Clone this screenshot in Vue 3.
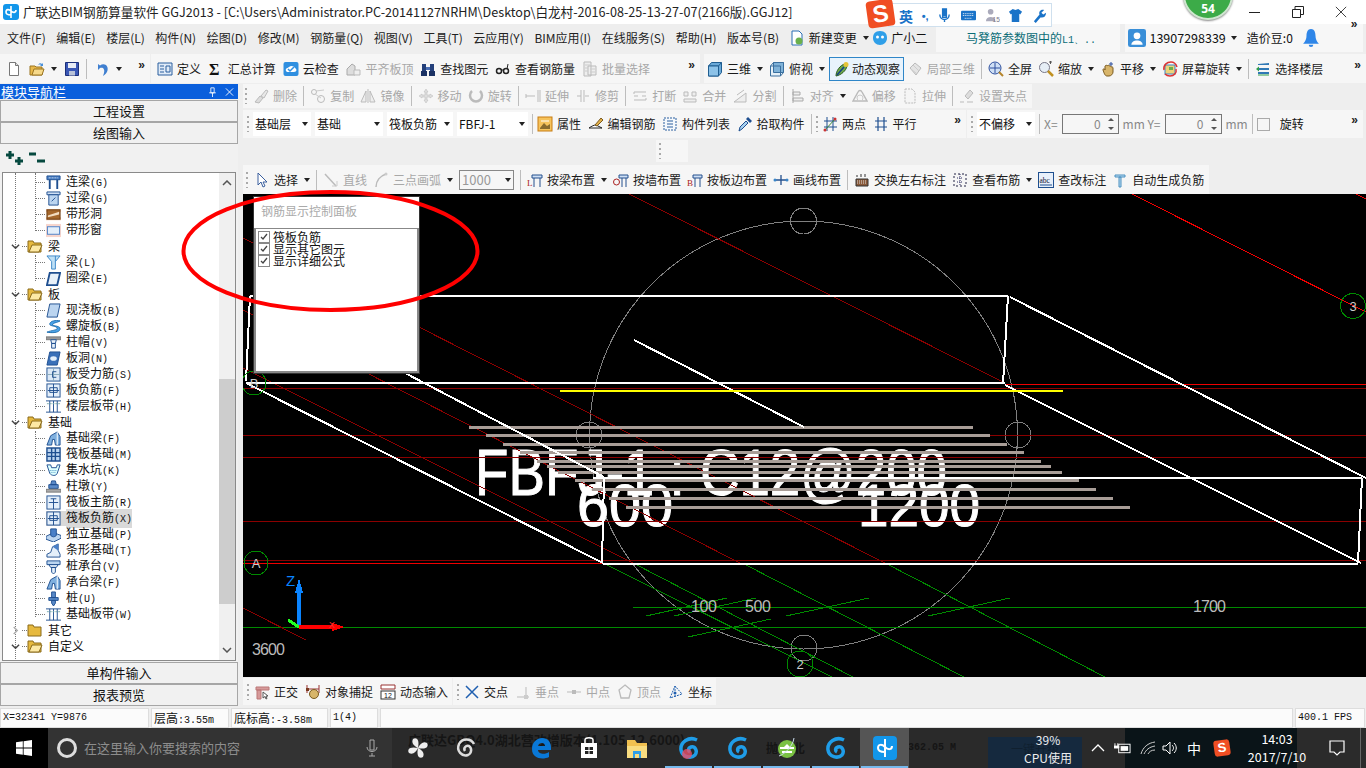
<script setup>
const icons = {
  doc: '<path d="M3.5 1.5h6l3 3v10h-9z" fill="#fff" stroke="#777"/><path d="M9.5 1.5v3h3" fill="#ddd" stroke="#777"/>',
  open: '<path d="M1 5h5l1 1h6v8H1z" fill="#e8b84a" stroke="#9a7420"/><path d="M3 14l2-6h10l-2 6z" fill="#f6d98a" stroke="#9a7420"/><path d="M9 4c1-2 3-2 4-1l1-1v3h-3l1-1c-1-.6-2-.4-3 0z" fill="#4a90d9"/>',
  save: '<path d="M1.5 1.5h13v13h-13z" fill="#3a57b5" stroke="#1c2f7a"/><path d="M4 2h8v5H4z" fill="#e8ecf5"/><path d="M5 10h6v4.500H5z" fill="#b9c2d8"/>',
  undo: '<path d="M4 3v6l2-2c3-1 5 1 4 5l-1 3c5-3 6-8 3-11-2-1-4-1-6 .5L4 3z" fill="#3f7fd0"/>',
  def: '<path d="M1 2h14v12H1z" fill="#dfeaf7" stroke="#2a5f9e"/><path d="M3 5h4M3 8h4M3 11h4M9 5h4v6H9z" stroke="#2a5f9e" fill="none"/>',
  sigma: '<text x="1" y="14" font-size="16" font-weight="700" font-family="Liberation Serif" fill="#111">Σ</text>',
  cloud: '<rect x=".5" y="1" width="15" height="14" rx="2" fill="#2f8fe0"/><path d="M3 10c-1-3 2-3 3-4 2-2 5-1 6 1 2 1 2 4-1 4H4z" fill="#fff"/><path d="M5 8l2 2 4-4" stroke="#2f8fe0" fill="none" stroke-width="1.500"/>',
  align: '<path d="M2 14V8l5-5 3 2v9z" fill="#ddd" stroke="#aaa"/><path d="M9 14h6V9H9z" fill="#eee" stroke="#bbb"/>',
  find: '<rect x="2" y="3" width="4" height="9" fill="#233f7a"/><rect x="10" y="3" width="4" height="9" fill="#233f7a"/><rect x="6" y="6" width="4" height="3" fill="#4a6fb5"/><rect x="1" y="10" width="6" height="5" fill="#1b3264"/><rect x="9" y="10" width="6" height="5" fill="#1b3264"/>',
  glasses: '<circle cx="4" cy="10" r="2.500" fill="none" stroke="#222" stroke-width="1.500"/><circle cx="11" cy="10" r="2.500" fill="none" stroke="#222" stroke-width="1.500"/><path d="M6 9h3M12 8l1-5" stroke="#222"/>',
  batch: '<path d="M2 1h7v14H2zM6 5h8v9H6z" fill="#eee" stroke="#bbb"/><path d="M3 4h5M3 7h3M3 10h3M8 8h5M8 11h5" stroke="#ccc"/>',
  cube: '<path d="M1.500 5l3-3.500h10v10l-3 3.500h-10z" fill="#6aa9d8" stroke="#1f5d90"/><path d="M1.500 5h10v10M11.500 5l3-3.500" fill="none" stroke="#1f5d90"/><path d="M1.500 5h10v10h-10z" fill="#8cc2e8" stroke="#1f5d90"/>',
  top: '<path d="M1.500 5l3-3.500h10v10l-3 3.500h-10z" fill="#e5f0f8" stroke="#3a6f9e"/><path d="M4.500 1.500h10v10h-10z" fill="#7fb2d8" stroke="#3a6f9e"/><path d="M1.500 5h10v10" fill="none" stroke="#3a6f9e"/>',
  orbit: '<path d="M2 15c0-5 4-11 9-12l2 2c-1 5-6 9-11 10z" fill="#6fa84a" stroke="#2a5c22"/><circle cx="12" cy="3.500" r="2.500" fill="#e5c43a"/><path d="M3 14l7-8" stroke="#123f8a" stroke-width="1.500"/>',
  local3d: '<path d="M3 7l5-5 6 5-5 7z" fill="#e4e4e4" stroke="#bbb"/><path d="M6 4l6 6M4 8l6 5" stroke="#ccc"/>',
  full: '<circle cx="7" cy="7" r="6" fill="#cfe0f5" stroke="#2d4f9e"/><path d="M7 2v10M2 7h10" stroke="#2d4f9e"/><path d="M11 11l4 4" stroke="#b5842a" stroke-width="2"/>',
  zoom: '<circle cx="6.500" cy="6.500" r="5" fill="#e6eef6" stroke="#778"/><path d="M10 10l5 5" stroke="#c09020" stroke-width="2.500"/><path d="M11 1h3M12.500 0v3" stroke="#555"/>',
  pan: '<path d="M3 9c0-2 2-1 2 0V5c1-1 2-1 2 0 1-1 2-1 2 0 1-.5 2 0 2 1 1-.5 2 0 2 1v4c0 2-2 4-4 4H7c-2 0-3-3-4-6z" fill="#d8b56a" stroke="#7a5a20"/><path d="M11 1v4M9 3h4" stroke="#2d4f9e"/>',
  rot: '<rect x="3" y="4" width="10" height="9" fill="#eed27a" stroke="#3a86c8"/><path d="M2 9c-1-5 3-8 7-8 3 0 5 2 6 5M14 8c1 4-2 7-6 7-2 0-4-1-5-2" fill="none" stroke="#d33" stroke-width="1.500"/><rect x="7" y="6" width="4" height="3" fill="#6ab04c"/>',
  floors: '<path d="M3 3l11-1v2H3zM3 7h11v2H3zM3 11h11v2H3z" fill="#2f78b5"/><path d="M1 8l3-2.500v5z" fill="#2f9e4a"/><path d="M3 14h11" stroke="#2f9e4a"/>',
  del: '<path d="M2 14l5-6 3 2-4 5z" fill="#ddd" stroke="#bbb"/><path d="M8 8l5-6 2 1-4 7z" fill="#e8e8e8" stroke="#bbb"/>',
  copy: '<circle cx="4" cy="4" r="2.500" fill="none" stroke="#bbb"/><circle cx="11" cy="11" r="3.500" fill="none" stroke="#bbb"/><path d="M6 3l8-1M5 6l6 4" stroke="#ccc"/>',
  mirror: '<path d="M6 3v11H1zM10 3v11h5zM8 1v14" fill="#eee" stroke="#bbb"/>',
  move: '<path d="M8 1l2 3H9v3h3V6l3 2-3 2V9H9v3h1l-2 3-2-3h1V9H4v1L1 8l3-2v1h3V4H6z" fill="#ddd" stroke="#bbb" stroke-width=".500"/>',
  rotate: '<path d="M4 3a6 6 0 1 0 8 0" fill="none" stroke="#bbb" stroke-width="2.500"/>',
  extend: '<path d="M1 8h9M1 6v4M13 2v12M15 2v12" stroke="#bbb" fill="none"/>',
  trim: '<path d="M2 8h4M10 8h4M6 2v12M9 2v12" stroke="#bbb" fill="none"/>',
  brk: '<path d="M2 4h12M2 12h12M2 8h4M10 8h4M2 4v2M14 10v2" stroke="#bbb" fill="none"/>',
  merge: '<path d="M2 4h4v4H2zM10 4h4v4h-4zM2 11h12v3H2z" fill="#eee" stroke="#bbb"/>',
  split: '<path d="M2 14L14 5v9z" fill="#eee" stroke="#bbb"/><path d="M5 7l7-5" stroke="#bbb"/>',
  alignl: '<path d="M3 1v14M3 4h7v3H3zM3 10h10v3H3z" fill="#eee" stroke="#aaa"/>',
  offset: '<path d="M1 13l5-9c1-2 3-2 4 0l5 9z" fill="none" stroke="#bbb" stroke-width="1.500"/><circle cx="8" cy="10" r="3" fill="none" stroke="#ccc"/>',
  stretch: '<path d="M3 1h7l3 3v11H3z" fill="#f5f5f5" stroke="#bbb" stroke-dasharray="2 1"/>',
  grip: '<path d="M1 14h4M8 14h6M11 2l3 3-5 6-3-3z" fill="#ddd" stroke="#bbb"/>',
  prop: '<rect x="1" y="1" width="14" height="14" fill="#f6c35c" stroke="#c77d12"/><path d="M3 12l4-5 3 3 3-2v5H3z" fill="#8a6b2d"/><path d="M4 5h8" stroke="#fff"/>',
  edit: '<path d="M1 12c3-2 5-3 7-3l6 3H1z" fill="#fff" stroke="#222"/><path d="M7 9l6-7 2 2-6 6z" fill="#e2b04a" stroke="#7a5a20"/>',
  list: '<path d="M2 2h12v12H2z" fill="#f4f8fc" stroke="#2a5f9e" stroke-dasharray="2 1"/><path d="M5 5h6M5 8h6M5 11h6" stroke="#2a5f9e"/>',
  pick: '<path d="M2 15l1-4 6-6 2 2-6 6z" fill="#a6d0f0" stroke="#1f4f90"/><path d="M9 3l2-2 4 4-2 2z" fill="#1f4f90"/>',
  two: '<path d="M2 5h13M2 11h13M5 1v14M11 1v14" stroke="#1e4f8f" fill="none"/><path d="M2 15l12-13" stroke="#3a8a3a"/><circle cx="3" cy="14" r="1.500" fill="#c33"/><circle cx="13" cy="3" r="1.500" fill="#c33"/>',
  par: '<path d="M2 5h12M2 11h12M5 1v14M11 1v14" stroke="#1e4f8f" fill="none" stroke-width="1.200"/>',
  sel: '<path d="M4 1v12l3-3 2 5 2-1-2-4h4z" fill="#fff" stroke="#3a5f9e"/>',
  line: '<path d="M2 2l11 12" stroke="#bbb" stroke-width="1.500"/><path d="M9 14h5V9" fill="none" stroke="#ccc"/>',
  arc: '<path d="M3 15C3 9 7 4 13 2" fill="none" stroke="#bbb" stroke-width="1.500"/><circle cx="13" cy="2" r="1.500" fill="#ccc"/>',
  beam: '<path d="M5 3h10v3H5zM7 6v9M13 6v9" fill="#cfe0f5" stroke="#24508e"/><text x="0" y="14" font-size="9" font-family="Liberation Serif" fill="#a22">L</text>',
  wall: '<path d="M6 3h9v3H6zM9 6v9M13 6v9" fill="#cfe0f5" stroke="#24508e"/><circle cx="3.500" cy="10" r="3" fill="none" stroke="#a22"/>',
  edge: '<path d="M6 3h9v3H6zM8 6v9M13 6v9" fill="#cfe0f5" stroke="#24508e"/><text x="0" y="14" font-size="9" font-family="Liberation Serif" fill="#a22">B</text>',
  dline: '<path d="M1 8h14M8 3v10" stroke="#24508e" stroke-width="1.300"/><circle cx="2" cy="8" r="1.500" fill="#3a86c8"/><circle cx="14" cy="8" r="1.500" fill="#3a86c8"/>',
  swap: '<path d="M2 7h12v7H2z" fill="#8a5a3a" stroke="#333"/><path d="M3 9h10M3 11h10" stroke="#ddd" stroke-dasharray="1 1"/><path d="M3 5V3M7 5V2M11 5V2" stroke="#333"/>',
  view: '<path d="M2 2h12v12H2z" fill="none" stroke="#224" stroke-dasharray="2 2"/><path d="M8 2v12M5 6h6M5 10h6" stroke="#336" stroke-dasharray="1 1"/>',
  abc: '<rect x=".5" y=".5" width="15" height="15" fill="#e7effa" stroke="#1e4f8f"/><text x="1.500" y="11" font-size="7.500" font-family="Liberation Serif" fill="#113">abc</text><path d="M2 13h12" stroke="#1e4f8f"/>',
  auto: '<path d="M3 3h10v2H3zM7 5h2v10H7z" fill="#bcdcf2" stroke="#4a90c0"/>',
  ortho: '<path d="M2 3h13v3H2zM3 6v9h4V6z" fill="#d69a9a" stroke="#b77"/><path d="M9 8v6l2-1.500 1 2.500 1-.500-1-2.500h2z" fill="#fff" stroke="#555"/>',
  snap: '<path d="M2 1v8M14 1v8" stroke="#933"/><path d="M2 5h12" stroke="#933"/><circle cx="9" cy="10" r="4.500" fill="#d8b56a" stroke="#7a5a20"/><rect x="1" y="4" width="3" height="3" fill="#7a3a20"/>',
  dyn: '<path d="M1 1h14v4H1z" fill="#fff" stroke="#933"/><rect x="1" y="7" width="14" height="8" fill="#fff" stroke="#333"/><text x="4" y="14" font-size="7" font-family="Liberation Sans" fill="#111">12</text>',
  cross: '<path d="M2 2l12 12M14 2L2 14" stroke="#1f5fb0" stroke-width="1.500"/>',
  perp: '<path d="M2 13h12M11 3v10" stroke="#bbb"/><rect x="9" y="11" width="4" height="4" fill="#ccc"/>',
  mid: '<path d="M1 8h14" stroke="#bbb"/><rect x="6" y="6" width="4" height="4" fill="#bbb"/>',
  apex: '<path d="M8 1l6 5-2 8H4L2 6z" fill="none" stroke="#bbb" stroke-width="1.300"/>',
  coord: '<path d="M2 14l5-12 7 8zM7 2v12" fill="none" stroke="#1f5fb0" stroke-dasharray="2 1"/><circle cx="7" cy="9" r="1.500" fill="#1f5fb0"/>',
  lianl: '<path d="M1 1h14v4H1z" fill="#4a80c8" stroke="#1f4f90"/><path d="M4 5v10M12 5v10" stroke="#1f4f90" stroke-width="2"/><path d="M3 3h10" stroke="#bcd" stroke-dasharray="2 1"/>',
  guol: '<path d="M1 1h14v3H1z" fill="#cfe0f5" stroke="#1f4f90"/><path d="M3 4h10v11H3z" fill="#bcd5f0" stroke="#1f4f90"/><path d="M6 11l4-4" stroke="#1f4f90"/>',
  ddong: '<path d="M0 2h16v3H0zM0 11h16v3H0z" fill="#f2c9b0"/><rect x="1" y="3" width="14" height="10" fill="#a5672c" stroke="#6a3a10"/><path d="M2 9l12-4v3L2 11z" fill="#f2dcc0"/>',
  dchuang: '<path d="M0 1h16v14H0z" fill="#f7d5cc"/><rect x="1.500" y="4" width="13" height="8" fill="#e4effa" stroke="#4a80c8"/>',
  liang: '<path d="M1 1h14l-5 6v8H6V7z" fill="#bfe0f5" stroke="#3a86c8"/><path d="M10 1v6" stroke="#3a86c8"/>',
  quan: '<path d="M4 2h11l-3 13H1z" fill="#e8f1fa" stroke="#1f4f90" stroke-width="2"/>',
  xian: '<path d="M4 1h11l-3 14H1z" fill="#bcd5f0" stroke="#1f4f90"/>',
  luo: '<path d="M15 2c-5-1-10 0-11 3-1 3 8 2 8 5 0 2-6 2-11 4 5 1 13 1 14-3 1-4-7-3-8-5 0-2 5-2 8-4z" fill="#4aa3e8" stroke="#1f6fb0"/>',
  zhum: '<path d="M0 2h16v3H0z" fill="#999" stroke="#777"/><path d="M5 5h6l-1 4H6zM6 9h4v5H6z" fill="#e8f1fa" stroke="#1f4f90"/>',
  bdong: '<path d="M4 1h11l-3 14H1z" fill="#3a70b8" stroke="#1f4f90"/><ellipse cx="8" cy="8" rx="3.500" ry="2.500" fill="#e4effa"/>',
  shoul: '<rect x="1" y="1" width="14" height="14" fill="#dce9f7" stroke="#1f4f90"/><path d="M8 1v14M1 8h14" stroke="#8ab"/><path d="M11 5H7v6h4" fill="none" stroke="#1f4f90"/>',
  fuj: '<rect x="1" y="1" width="14" height="14" fill="#e4effa" stroke="#1f4f90"/><path d="M8 1v14M4 5h8v5H4zM2 8h12" fill="none" stroke="#1f4f90"/>',
  loub: '<path d="M0 2h16M0 14h16M4 2v12M12 2v12M8 2v12" stroke="#1f4f90" fill="none"/><path d="M1 5h14" stroke="#7aa" stroke-dasharray="2 1"/>',
  jcl: '<path d="M1 15l4-10L12 1l3 5v9h-5l-1-6H7l-1 6z" fill="#7fb0df" stroke="#1f4f90"/><path d="M12 1v14" stroke="#fff"/>',
  fb: '<path d="M1 1h14v14H1z" fill="#bcd5f0" stroke="#1f4f90" stroke-width="1.500"/><path d="M6 1v14M10 1v14M1 6h14M1 10h14" stroke="#1f4f90" stroke-width="1.500"/>',
  jis: '<path d="M1 2l4 0 1 3h5l1-3h3l-3 9c-1 3-6 3-8 0z" fill="#dff" stroke="#1f4f90"/><path d="M4 8h8M5 10h6" stroke="#4a90c0" stroke-dasharray="1 1"/>',
  dun: '<path d="M5 6l1-4h4l1 4zM3 6h10v4H3z" fill="#5a8ac8" stroke="#1f4f90"/><path d="M0 11h16v3H0z" fill="#aaa" stroke="#777"/>',
  zj: '<rect x="1" y="1" width="14" height="14" fill="#e4effa" stroke="#1f4f90"/><path d="M8 4v11M3 8h10M5 4h6" stroke="#1f4f90"/>',
  duli: '<path d="M0 10l8-4 8 3v3l-8 4-8-3z" fill="#bcd5f0" stroke="#1f4f90"/><path d="M5 2h6v7c-2 2-4 2-6 0z" fill="#4a80c8" stroke="#1f4f90"/>',
  tiao: '<path d="M1 15v-3l4-2 2-6 6-3v7l2 4v3z" fill="#e4effa" stroke="#1f4f90"/><path d="M7 4l6-3v7" fill="#4a80c8"/>',
  cheng: '<path d="M1 2h14v4H1z" fill="#bcd5f0" stroke="#1f4f90"/><path d="M3 6h10l-2 3H5zM6 9h4v5l-2 2-2-2z" fill="#e4effa" stroke="#1f4f90"/>',
  zhuang: '<path d="M6 1h4v6H6zM3 7h10v3H3zM6 10h4v3l-2 3-2-3z" fill="#5a8ac8" stroke="#1f4f90"/>'
}

const menus = ['文件(F)', '编辑(E)', '楼层(L)', '构件(N)', '绘图(D)', '修改(M)', '钢筋量(Q)', '视图(V)', '工具(T)', '云应用(Y)', 'BIM应用(I)', '在线服务(S)', '帮助(H)', '版本号(B)']

const row2 = [
  { w: 150, items: [
    { i: 'doc' }, { i: 'open', a: 1 }, { i: 'save' }, { k: 'sep' }, { i: 'undo', a: 1 }, { k: 'more' }
  ] },
  { w: 549, items: [
    { i: 'def', t: '定义' }, { i: 'sigma', t: '汇总计算' }, { i: 'cloud', t: '云检查' }, { i: 'align', t: '平齐板顶', off: 1 },
    { i: 'find', t: '查找图元' }, { i: 'glasses', t: '查看钢筋量' }, { i: 'batch', t: '批量选择', off: 1 }, { k: 'more' }
  ] },
  { w: 662, items: [
    { i: 'cube', t: '三维', a: 1 }, { i: 'top', t: '俯视', a: 1 }, { i: 'orbit', t: '动态观察', on: 1 }, { i: 'local3d', t: '局部三维', off: 1 }, { k: 'sep' },
    { i: 'full', t: '全屏' }, { i: 'zoom', t: '缩放', a: 1 }, { i: 'pan', t: '平移', a: 1 }, { i: 'rot', t: '屏幕旋转', a: 1 }, { k: 'sep' },
    { i: 'floors', t: '选择楼层' }, { k: 'more' }
  ] }
]

const rows = [
  { cls: 'r3', groups: [{ w: 789, items: [
    { k: 'grip' }, { i: 'del', t: '删除', off: 1 }, { k: 'sep' }, { i: 'copy', t: '复制', off: 1 }, { i: 'mirror', t: '镜像', off: 1 }, { k: 'sep' },
    { i: 'move', t: '移动', off: 1 }, { i: 'rotate', t: '旋转', off: 1 }, { k: 'sep' }, { i: 'extend', t: '延伸', off: 1 }, { i: 'trim', t: '修剪', off: 1 }, { k: 'sep' },
    { i: 'brk', t: '打断', off: 1 }, { i: 'merge', t: '合并', off: 1 }, { i: 'split', t: '分割', off: 1 }, { k: 'sep' },
    { i: 'alignl', t: '对齐', off: 1, a: 1 }, { i: 'offset', t: '偏移', off: 1 }, { i: 'stretch', t: '拉伸', off: 1 }, { k: 'sep' }, { i: 'grip', t: '设置夹点', off: 1 }
  ] }] },
  { cls: 'r4', groups: [
    { w: 723, items: [
      { k: 'grip' }, { k: 'sel', t: '基础层', w: 58 }, { k: 'sel', t: '基础', w: 68 }, { k: 'sel', t: '筏板负筋', w: 66 }, { k: 'sel', t: 'FBFJ-1', w: 71 }, { k: 'sep' },
      { i: 'prop', t: '属性' }, { i: 'edit', t: '编辑钢筋' }, { i: 'list', t: '构件列表' }, { i: 'pick', t: '拾取构件' }, { k: 'sep' }, { k: 'grip' },
      { i: 'two', t: '两点' }, { i: 'par', t: '平行' }, { k: 'more' }
    ] },
    { w: 396, items: [
      { k: 'grip' }, { k: 'sel', t: '不偏移', w: 58 }, { k: 'sep' }, { k: 'lbl', t: 'X=' }, { k: 'spin' }, { k: 'lbl', t: 'mm Y=' }, { k: 'spin' }, { k: 'lbl', t: 'mm' }, { k: 'sep' },
      { k: 'chk' }, { k: 'txt', t: '旋转' }, { k: 'more' }
    ] }
  ] },
  { cls: 'r5', groups: [{ w: 32, items: [{ k: 'grip' }] }] },
  { cls: 'r6', groups: [{ w: 966, items: [
    { k: 'grip' }, { i: 'sel', t: '选择', a: 1 }, { k: 'sep' }, { i: 'line', t: '直线', off: 1 }, { i: 'arc', t: '三点画弧', off: 1, a: 1 }, { k: 'num' }, { k: 'sep' },
    { i: 'beam', t: '按梁布置', a: 1 }, { i: 'wall', t: '按墙布置' }, { i: 'edge', t: '按板边布置' }, { i: 'dline', t: '画线布置' }, { k: 'sep' },
    { i: 'swap', t: '交换左右标注' }, { i: 'view', t: '查看布筋', a: 1 }, { i: 'abc', t: '查改标注' }, { i: 'auto', t: '自动生成负筋' }
  ] }] }
]

const snap = [
  { w: 209, items: [{ k: 'grip' }, { i: 'ortho', t: '正交' }, { i: 'snap', t: '对象捕捉' }, { i: 'dyn', t: '动态输入' }] },
  { w: 263, items: [{ k: 'grip' }, { i: 'cross', t: '交点' }, { i: 'perp', t: '垂点', off: 1 }, { i: 'mid', t: '中点', off: 1 }, { i: 'apex', t: '顶点', off: 1 }, { i: 'coord', t: '坐标' }] }
]

const tree = [
  { i: 'lianl', t: '连梁', c: '(G)' }, { i: 'guol', t: '过梁', c: '(G)' }, { i: 'ddong', t: '带形洞' }, { i: 'dchuang', t: '带形窗' },
  { f: 1, t: '梁' }, { i: 'liang', t: '梁', c: '(L)' }, { i: 'quan', t: '圈梁', c: '(E)' },
  { f: 1, t: '板' }, { i: 'xian', t: '现浇板', c: '(B)' }, { i: 'luo', t: '螺旋板', c: '(B)' }, { i: 'zhum', t: '柱帽', c: '(V)' }, { i: 'bdong', t: '板洞', c: '(N)' },
  { i: 'shoul', t: '板受力筋', c: '(S)' }, { i: 'fuj', t: '板负筋', c: '(F)' }, { i: 'loub', t: '楼层板带', c: '(H)' },
  { f: 1, t: '基础' }, { i: 'jcl', t: '基础梁', c: '(F)' }, { i: 'fb', t: '筏板基础', c: '(M)' }, { i: 'jis', t: '集水坑', c: '(K)' }, { i: 'dun', t: '柱墩', c: '(Y)' },
  { i: 'zj', t: '筏板主筋', c: '(R)' }, { i: 'fuj', t: '筏板负筋', c: '(X)', on: 1 }, { i: 'duli', t: '独立基础', c: '(P)' }, { i: 'tiao', t: '条形基础', c: '(T)' },
  { i: 'cheng', t: '桩承台', c: '(V)' }, { i: 'jcl', t: '承台梁', c: '(F)' }, { i: 'zhuang', t: '桩', c: '(U)' }, { i: 'loub', t: '基础板带', c: '(W)' },
  { f: 2, t: '其它' }, { f: 1, t: '自定义' }
]

const guides = [
  { left: '15px', top: '0', height: '488px' },
  { left: '35px', top: '0', height: '58px' },
  { left: '35px', top: '82px', height: '26px' },
  { left: '35px', top: '130px', height: '106px' },
  { left: '35px', top: '258px', height: '186px' }
]

const bars = [[427, 973], [435, 990], [444, 1007], [452, 1024], [461, 1041], [466, 1051], [472, 1062], [480, 1079], [489, 1096], [498, 1113], [507, 1130]]
  .map(([y, x2]) => ({ y, x2, x1: x2 - 504 }))

const whites = [
  'M250 296H1008', 'M250 296L246 381', 'M246 383H1005', 'M1008 296L1003 384', 'M1010 297L1366 478', 'M1005 385L1361 563',
  'M405 373L604 477', 'M246 383L603 563', 'M634 340L804 427', 'M593 478H1362', 'M603 564H1358', 'M1362 478L1358 563', 'M604 478L602 563'
]
const darks = [
  'M243 388H1366', 'M243 435H1366', 'M243 457H1366', 'M243 521H1366', 'M243 560H1366', 'M243 238L885 563', 'M243 310L740 563',
  'M243 368L633 563', 'M629 194L1005 383', 'M243 608L306 640'
]
const brights = ['M1005 384H1366', 'M243 563H603', 'M1132 194L1366 312', 'M1356 194L1366 199']
const greens = [
  'M243 627H1366', 'M633 607H1366', 'M603 563L832 677', 'M633 563L853 677', 'M742 563L964 677', 'M885 563L1105 677',
  'M646 616L727 598', 'M674 616L756 598', 'M688 637L771 619', 'M786 616L869 598', 'M928 616L1010 598'
]
const greys = [[803.5, 221], [589, 435], [1018, 435], [804, 648]]
const rings = [
  { x: 256, y: 563, r: 12, t: 'A' }, { x: 800, y: 664, r: 13, t: '2' }, { x: 1353, y: 306, r: 12.5, t: '3' }, { x: 254, y: 383, r: 12, t: 'B' }
]
const notes = [
  { x: 691, t: '100', y: 612, l: 26 }, { x: 745, t: '500', y: 612, l: 26 }, { x: 1193, t: '1700', y: 612, l: 33 }, { x: 252, t: '3600', y: 655, l: 33 }
]
const checks = ['筏板负筋', '显示其它图元', '显示详细公式']
const stats = [
  { t: 'X=32341 Y=9876', w: 149 }, { c: '层高', t: ':3.55m', w: 78 }, { c: '底标高', t: ':-3.58m', w: 97 }, { t: '1(4)', w: 48 }, { t: '', w: 913 }, { t: '400.1 FPS', w: 70 }
]
</script>

<template>
  <div class="screen">
    <header class="title">
      <svg class="logo" viewBox="0 0 16 16"><rect width="16" height="16" rx="3" fill="#1296ea" /><path d="M8 2v12M3 8c0-3 3-3 5-1 2 2 5 2 5-1M3 8c0 2 2 3 5 3" fill="none" stroke="#fff" stroke-width="1.600" /></svg>
      <span>广联达BIM钢筋算量软件 GGJ2013 - [C:\Users\Administrator.PC-20141127NRHM\Desktop\白龙村-2016-08-25-13-27-07(2166版).GGJ12]</span>
      <div class="sogou">
        <span class="s-logo">S</span>
        <b class="s-en">英</b>
        <span class="s-p">•,</span>
        <svg viewBox="0 0 16 16"><path d="M6 1h4v9H6zM3 7c0 7 10 7 10 0M8 12v3" fill="none" stroke="#1a73c8" stroke-width="1.500" /><path d="M6 1h4v8H6z" fill="#1a73c8" /></svg>
        <svg viewBox="0 0 16 16"><rect y="3" width="16" height="10" rx="1" fill="#1a73c8" /><path d="M2 6h12M2 8h12M4 11h8" stroke="#fff" stroke-dasharray="1 1" /></svg>
        <svg viewBox="0 0 16 16"><circle cx="6" cy="4" r="3" fill="#aab" /><path d="M1 14c0-6 10-6 10 0z" fill="#aab" /><text x="8" y="15" font-size="7" font-family="Liberation Sans" fill="#778">15</text></svg>
        <svg viewBox="0 0 16 16"><path d="M5 1L1 4l2 3 1-1v9h8V6l1 1 2-3-4-3-3 1z" fill="#1a73c8" /></svg>
        <svg viewBox="0 0 16 16"><path d="M2 14l6-7c-1-3 1-6 5-5l-3 3 2 2 3-2c0 4-3 6-6 5l-5 6z" fill="#1a73c8" /></svg>
      </div>
      <div class="badge"><span>54</span></div>
      <div class="winbtns">
        <span class="wb-min"></span>
        <svg viewBox="0 0 12 12"><path d="M.5 3.500h8v8h-8zM3 3.500V.5h8.500v8H8.500" fill="none" stroke="#222" /></svg>
        <svg viewBox="0 0 14 14"><path d="M1 1l12 12M13 1L1 13" stroke="#222" /></svg>
      </div>
    </header>

    <nav class="menu">
      <span v-for="m in menus" :key="m" class="mi">{{ m }}</span>
      <span class="m-ext">
        <svg class="ic" viewBox="0 0 16 16"><path d="M3 1h7l3 3v11H3z" fill="#fff" stroke="#2a6fb5" /><circle cx="10" cy="11" r="3.500" fill="#6ab04c" /></svg>
        新建变更<i class="ar"></i>
      </span>
      <span class="m-ext g">
        <svg class="ic" viewBox="0 0 16 16"><path d="M8 1c5 0 7 3 7 7s-3 7-7 7-7-3-7-7 2-7 7-7z" fill="#2f9fe8" /><circle cx="5.500" cy="7" r="1.500" fill="#fff" /><circle cx="10.500" cy="7" r="1.500" fill="#fff" /></svg>
        广小二
      </span>
      <span class="ticker">马凳筋参数图中的<em>L1、..</em></span>
      <span class="acct">
        <svg class="ic big" viewBox="0 0 16 16"><rect width="16" height="16" rx="2" fill="#3a8fd8" /><circle cx="8" cy="6" r="3" fill="#fff" /><path d="M3 14c0-5 10-5 10 0z" fill="#fff" /></svg>
        13907298339<i class="ar"></i><span class="bean">造价豆:0</span>
        <svg class="ic big" viewBox="0 0 16 16"><path d="M8 0c3 0 4 3 4 6s1 5 3 7H1c2-2 3-4 3-7s1-6 4-6z" fill="#2f86e8" /><path d="M6 14a2 2 0 0 0 4 0z" fill="#2f86e8" /></svg>
        <b class="more acct-more">»</b>
      </span>
    </nav>

    <div class="tools top">
      <div v-for="(g, gi) in row2" :key="gi" class="group" :style="{ width: g.w + 'px' }">
        <template v-for="(it, n) in g.items" :key="n">
          <span v-if="it.k === 'sep'" class="sep"></span>
          <b v-else-if="it.k === 'more'" class="more">»</b>
          <span v-else class="btn" :class="{ off: it.off, on: it.on }">
            <svg class="ic" viewBox="0 0 16 16" v-html="icons[it.i]"></svg>
            <span v-if="it.t">{{ it.t }}</span>
            <i v-if="it.a" class="ar"></i>
          </span>
        </template>
      </div>
    </div>

    <div class="main">
      <aside class="nav">
        <div class="nav-head"><span>模块导航栏</span><span class="pin">
          <svg viewBox="0 0 10 12"><path d="M3 1h4v6H3zM1 7h8M5 7v5" fill="none" stroke="#fff" /></svg>
          <svg viewBox="0 0 10 10"><path d="M1 1l8 8M9 1L1 9" stroke="#fff" /></svg>
        </span></div>
        <div class="nbtn">工程设置</div>
        <div class="nbtn">绘图输入</div>
        <div class="tree-wrap">
          <div class="tree-tools">
            <svg viewBox="0 0 18 16"><path d="M4 1v8M0 5h8M13 7v8M9 11h8" stroke="#06493f" stroke-width="3" /></svg>
            <svg viewBox="0 0 18 16"><path d="M1 4h7M9 11h8" stroke="#06493f" stroke-width="3" /></svg>
          </div>
          <div class="tree">
            <i v-for="(g, n) in guides" :key="n" class="guide" :style="g"></i>
            <div v-for="(r, n) in tree" :key="n" class="row" :class="{ folder: r.f, hit: r.on }">
              <template v-if="r.f">
                <svg class="chev" viewBox="0 0 10 10"><path :d="r.f === 1 ? 'M1 3l4 4 4-4' : 'M3 1l4 4-4 4'" fill="none" :stroke="r.f === 1 ? '#444' : '#aaa'" stroke-width="1.500" /></svg>
                <i class="dash short"></i>
                <svg class="fold" viewBox="0 0 16 14"><path d="M1 2h5l1 2h7v9H1z" fill="#e6b93f" stroke="#8a6a1a" /><path v-if="r.f === 1" d="M2 13l3-7h10l-3 7z" fill="#fde9a5" stroke="#8a6a1a" /></svg>
                <span class="rt">{{ r.t }}</span>
              </template>
              <template v-else>
                <i class="dash"></i>
                <svg class="ic tic" viewBox="0 0 16 16" v-html="icons[r.i]"></svg>
                <span class="rt">{{ r.t }}<span class="code">{{ r.c }}</span></span>
              </template>
            </div>
            <div class="sbar">
              <svg viewBox="0 0 10 6"><path d="M1 5l4-4 4 4" fill="none" stroke="#555" stroke-width="1.500" /></svg>
              <svg viewBox="0 0 10 6"><path d="M1 1l4 4 4-4" fill="none" stroke="#555" stroke-width="1.500" /></svg>
              <i class="thumb"></i>
            </div>
          </div>
        </div>
        <div class="nbtn">单构件输入</div>
        <div class="nbtn">报表预览</div>
      </aside>

      <section class="work">
        <div v-for="r in rows" :key="r.cls" class="tools" :class="r.cls">
          <div v-for="(g, gi) in r.groups" :key="gi" class="group" :style="{ width: g.w + 'px' }">
            <template v-for="(it, n) in g.items" :key="n">
              <span v-if="it.k === 'sep'" class="sep"></span>
              <i v-else-if="it.k === 'grip'" class="grip"></i>
              <b v-else-if="it.k === 'more'" class="more">»</b>
              <span v-else-if="it.k === 'sel'" class="sel" :style="{ width: it.w + 'px' }">{{ it.t }}<i class="ar"></i></span>
              <span v-else-if="it.k === 'lbl'" class="lbl">{{ it.t }}</span>
              <span v-else-if="it.k === 'txt'" class="txt">{{ it.t }}</span>
              <span v-else-if="it.k === 'chk'" class="chk"></span>
              <span v-else-if="it.k === 'spin'" class="spin">0<i class="sp-a"></i><i class="sp-b"></i></span>
              <span v-else-if="it.k === 'num'" class="num">1000<i class="ar"></i></span>
              <span v-else class="btn" :class="{ off: it.off }">
                <svg class="ic" viewBox="0 0 16 16" v-html="icons[it.i]"></svg>
                <span>{{ it.t }}</span>
                <i v-if="it.a" class="ar"></i>
              </span>
            </template>
          </div>
        </div>

        <div class="canvas">
          <svg class="cad" viewBox="243 194 1123 483" width="1123" height="483">
            <circle cx="803.500" cy="435" r="214" fill="none" stroke="#808080" />
            <circle v-for="(c, n) in greys" :key="n" :cx="c[0]" :cy="c[1]" r="13" fill="none" stroke="#808080" />
            <g fill="#fff" stroke="#fff" stroke-width="1" font-family="Liberation Sans">
              <text x="475" y="495" font-size="64" textLength="472" lengthAdjust="spacingAndGlyphs">FBFJ-1 : C12@200</text>
              <text x="577" y="526" font-size="60" textLength="96" lengthAdjust="spacingAndGlyphs">600</text>
              <text x="858" y="526" font-size="60" textLength="122" lengthAdjust="spacingAndGlyphs">1200</text>
            </g>
            <path v-for="d in greens" :key="d" :d="d" stroke="#008a00" fill="none" />
            <path v-for="d in darks" :key="d" :d="d" stroke="#8b0000" fill="none" />
            <path v-for="d in brights" :key="d" :d="d" stroke="#f00000" fill="none" />
            <line v-for="(b, n) in bars" :key="n" :x1="b.x1" :x2="b.x2" :y1="b.y" :y2="b.y" stroke="#a89d97" stroke-width="3" />
            <path v-for="d in whites" :key="d" :d="d" stroke="#fff" stroke-width="2" fill="none" />
            <path d="M560 391H1063" stroke="#ff0" stroke-width="2" />
            <g v-for="r in rings" :key="r.t">
              <circle :cx="r.x" :cy="r.y" :r="r.r" fill="none" stroke="#008a00" />
              <text :x="r.x" :y="r.y + 5" font-size="13" text-anchor="middle" font-family="Liberation Sans" fill="#ccc">{{ r.t }}</text>
            </g>
            <text v-for="t in notes" :key="t.t" :x="t.x" :y="t.y" font-size="16" :textLength="t.l" font-family="Liberation Sans" fill="#bbb">{{ t.t }}</text>
            <path d="M299 627V588" stroke="#0a84ff" stroke-width="4" />
            <path d="M299 578l4 15h-8z" fill="#0a84ff" />
            <path d="M299 627H332" stroke="#f00" stroke-width="4" />
            <path d="M345 627l-13 4v-8z" fill="#f00" />
            <path d="M299 627L288 620" stroke="#2f2" stroke-width="3" />
            <text x="286" y="586" font-size="15" font-family="Liberation Sans" fill="#0a84ff">Z</text>
            <text x="329" y="628" font-size="9" font-family="Liberation Sans" fill="#f33">X</text>
          </svg>
          <div class="panel">
            <div class="p-title">钢筋显示控制面板</div>
            <div class="p-box">
              <div v-for="c in checks" :key="c" class="p-row">
                <span class="p-chk"><svg viewBox="0 0 10 10"><path d="M2 5l2 2 4-5" fill="none" stroke="#444" stroke-width="1.300" /></svg></span>
                <span>{{ c }}</span>
              </div>
            </div>
          </div>
        </div>

        <div class="tools r7">
          <div v-for="(g, gi) in snap" :key="gi" class="group" :style="{ width: g.w + 'px' }">
            <template v-for="(it, n) in g.items" :key="n">
              <i v-if="it.k === 'grip'" class="grip"></i>
              <span v-else class="btn" :class="{ off: it.off }">
                <svg class="ic" viewBox="0 0 16 16" v-html="icons[it.i]"></svg>
                <span>{{ it.t }}</span>
              </span>
            </template>
          </div>
        </div>
      </section>
    </div>

    <div class="status">
      <span v-for="(s, n) in stats" :key="n" class="cell" :style="{ width: s.w + 'px' }"><span v-if="s.c" class="cj">{{ s.c }}</span>{{ s.t }}</span>
    </div>

    <footer class="taskbar">
      <div class="start"><svg viewBox="0 0 16 16"><path d="M0 2.300l6.800-1v6.300H0zM7.600 1.200L16 0v7.600H7.600zM0 8.400h6.800v6.300L0 13.700zM7.600 8.400H16V16l-8.400-1.200z" fill="#fff" /></svg></div>
      <div class="search">
        <i class="ring"></i>
        <span class="s-text">在这里输入你要搜索的内容</span>
        <svg class="mic" viewBox="0 0 12 18"><path d="M4 1h4v10H4zM1 8c0 6 10 6 10 0M6 14v3M3 17h6" fill="none" stroke="#aaa" /></svg>
      </div>
      <div class="apps">
        <span class="ghost g1">广联达GBQ4.0湖北营改增版本(1.105.12.6000)</span>
        <span class="ghost g2">抛 湖北</span>
        <span class="ghost g3">362.05 M</span>
        <span class="ghost-btn">一键升级</span>
        <span class="tapp"><svg viewBox="0 0 24 24"><path d="M12 12C8 10 5 7 7 3c3-2 7 0 5 9zM12 12c2-4 5-7 9-5 2 3 0 7-9 5zM12 12c4 2 7 5 5 9-3 2-7 0-5-9zM12 12c-2 4-5 7-9 5-2-3 0-7 9-5z" fill="#eee" /></svg></span>
        <span class="tapp"><svg viewBox="0 0 24 24"><path d="M20 8C17 2 8 2 5 8c-3 7 3 13 9 11 4-2 4-7 1-9-3-1-6 2-4 5" fill="none" stroke="#ddd" stroke-width="2.500" /></svg></span>
        <i class="t-sep"></i>
        <span class="tapp"><svg viewBox="0 0 24 24"><path d="M3 13C3 6 8 2 13 2c6 0 9 4 9 10v2H9c0 4 7 5 11 2v5c-6 3-17 2-17-8zm6-3h7c0-4-6-4-7 0z" fill="#0a78d7" /></svg></span>
        <span class="tapp"><svg viewBox="0 0 24 24"><path d="M4 7h16v15H4z" fill="#fff" /><path d="M8 7V4c0-3 8-3 8 0v3" fill="none" stroke="#fff" stroke-width="1.500" /><path d="M8 11h3.500v3H8zM12.500 11H16v3h-3.500zM8 15h3.500v3H8zM12.500 15H16v3h-3.500z" fill="#222" /></svg></span>
        <span class="tapp lastpin"><svg viewBox="0 0 24 24"><path d="M2 4h8l2 3h10v15H2z" fill="#f0c050" /><path d="M2 10h20v12H2z" fill="#f8dc80" /><path d="M8 15h8v7h-2v-4h-4v4H8z" fill="#2f9fe8" /></svg></span>
        <span class="tapp run"><svg viewBox="0 0 24 24"><path d="M20 4C12 0 3 6 4 14c1 7 10 9 14 5 3-4 0-9-4-8-3 1-3 4-1 5" fill="none" stroke="#1f9de8" stroke-width="3.500" /><circle cx="10" cy="18" r="5" fill="#e8506a" opacity=".8" /></svg></span>
        <span class="tapp run"><svg viewBox="0 0 24 24"><path d="M20 4C12 0 3 6 4 14c1 7 10 9 14 5 3-4 0-9-4-8-3 1-3 4-1 5" fill="none" stroke="#1f9de8" stroke-width="3.500" /></svg></span>
        <span class="tapp run"><svg viewBox="0 0 24 24"><circle cx="12" cy="13" r="9" fill="#7ac143" /><path d="M5 12h14M7 16h10" stroke="#fff" stroke-width="2" /><path d="M12 8l3 3H9z" fill="#fff" /><path d="M4 20C10 18 18 10 19 2" fill="none" stroke="#cde" /></svg></span>
        <span class="tapp run"><svg viewBox="0 0 24 24"><path d="M20 4C12 0 3 6 4 14c1 7 10 9 14 5 3-4 0-9-4-8-3 1-3 4-1 5" fill="none" stroke="#1f9de8" stroke-width="3.500" /></svg></span>
        <span class="tapp run active"><svg viewBox="0 0 24 24"><rect width="24" height="24" rx="4" fill="#1296ea" /><path d="M12 3v18M5 12c0-4 4-4 7-1 3 3 7 3 7-1M5 12c0 3 3 4 7 4" fill="none" stroke="#fff" stroke-width="2" /></svg></span>
        <span class="cpu"><span>39%</span><span>CPU使用</span></span>
      </div>
      <div class="tray">
        <svg class="t1" viewBox="0 0 14 8"><path d="M1 7l6-6 6 6" fill="none" stroke="#fff" stroke-width="1.300" /></svg>
        <svg class="t2" viewBox="0 0 18 14"><rect x="5" y="3" width="12" height="9" fill="none" stroke="#fff" /><rect x="7" y="5" width="8" height="5" fill="#fff" /><path d="M1 2v3M4 2v3M0 5h5v2H0z" stroke="#fff" fill="#fff" /></svg>
        <svg class="t3" viewBox="0 0 16 14"><path d="M1 13c2-7 7-11 14-12M4 13c2-4 5-7 11-8M8 13c1-2 3-4 7-4" fill="none" stroke="#ccc" /></svg>
        <svg class="t3" viewBox="0 0 16 14"><path d="M1 5h3l4-4v12L4 9H1zM10 4c2 2 2 4 0 6M12 2c3 3 3 7 0 10" fill="none" stroke="#fff" /></svg>
        <span class="zh">中</span>
        <span class="s-logo small">S</span>
      </div>
      <div class="clock"><span>14:03</span><span>2017/7/10</span></div>
      <div class="notify"><svg viewBox="0 0 16 16"><path d="M1 1h14v11h-4l-3 3-3-3H1z" fill="none" stroke="#fff" stroke-width="1.200" /></svg></div>
    </footer>

    <svg class="ellipse" viewBox="0 0 600 330" width="600" height="330"><ellipse cx="330.500" cy="251" rx="147" ry="59" fill="none" stroke="#f00" stroke-width="4" /></svg>
  </div>
</template>

<style scoped>
.screen { position: relative; width: 1366px; height: 768px; overflow: hidden; display: flex; flex-direction: column; background: #eeeeee; color: #111; font: 12px/16px "Noto Sans CJK SC", "Noto Sans", sans-serif; }
svg { display: block; flex: none; }
.ic { width: 16px; height: 16px; }
.ic.big { width: 18px; height: 18px; }

.title { position: relative; height: 24px; flex: none; background: #fff; display: flex; align-items: center; gap: 4px; padding-left: 3px; font-size: 12.620px; color: #222; white-space: nowrap; }
.logo { width: 16px; height: 16px; }
.sogou { position: absolute; left: 888px; top: 3px; width: 164px; height: 24px; box-sizing: border-box; padding: 1px 4px 0 10px; background: #fff; border: 1px solid #cfe0ee; display: flex; align-items: center; justify-content: space-between; z-index: 2; }
.sogou svg { width: 15px; height: 15px; }
.s-logo { position: absolute; left: -22px; top: -4px; width: 27px; height: 27px; border-radius: 4px; background: #f04e23; color: #fff; font: 700 24px/27px "Liberation Sans", sans-serif; text-align: center; transform: rotate(-8deg); }
.s-en { color: #1a73c8; font-size: 14px; }
.s-p { color: #1a73c8; font: 700 11px "Liberation Sans", sans-serif; }
.badge { position: absolute; left: 1183px; top: -30px; width: 46px; height: 46px; border-radius: 50%; background: #3cab48; border: 2px solid #cfe6d0; box-shadow: 0 1px 2px #888; display: flex; align-items: flex-end; justify-content: center; color: #fff; font: 700 12px/18px "Noto Sans", sans-serif; }
.winbtns { position: absolute; right: 19px; top: 4px; width: 98px; height: 16px; display: flex; align-items: center; justify-content: space-between; }
.winbtns svg { width: 12px; height: 12px; }
.wb-min { width: 11px; height: 1px; background: #222; }

.menu { height: 30px; flex: none; box-sizing: border-box; padding: 0 0 2px 7px; display: flex; align-items: center; gap: 10.600px; white-space: nowrap; }
.mi { color: #222; }
.m-ext { display: flex; align-items: center; gap: 4px; margin-left: -1px; }
.m-ext.g { margin-left: -7px; gap: 3px; }
.ticker { width: 184px; height: 28px; box-sizing: border-box; margin-left: -2px; padding-left: 30px; background: #f7f7f7; color: #0b6d77; line-height: 28px; }
.ticker em { font: 10px "Liberation Mono", monospace; }
.acct { position: relative; display: flex; align-items: center; gap: 3px; margin-left: -5px; background: #f7f7f7; height: 28px; padding-left: 3px; width: 238px; box-sizing: border-box; font-size: 12.500px; }
.bean { margin-left: 7px; margin-right: 6px; font-size: 12px; }
.acct-more { position: absolute; right: 4px; top: 2px; }
.ar { display: inline-block; width: 0; height: 0; margin-left: 2px; border: 3px solid transparent; border-top: 4px solid #222; border-bottom: 0; vertical-align: middle; flex: none; }
.more { margin-left: auto; margin-top: -8px; font: 700 12px/12px "Liberation Sans", sans-serif; color: #222; padding-right: 2px; }

.tools { display: flex; flex: none; gap: 2px; }
.top { height: 29px; gap: 1px; }
.group { box-sizing: border-box; height: 100%; background: #f6f6f6; display: flex; align-items: center; gap: 5px; padding: 0 3px 0 5px; white-space: nowrap; flex: none; }
.top .group { padding-left: 6px; gap: 6.800px; }
.top .group:nth-child(3) { margin-left: 3px; padding-left: 3px; gap: 6px; }
.btn { display: flex; align-items: center; gap: 4px; height: 22px; color: #1a1a1a; }
.btn.off { color: #a8a8a8; }
.btn.on { box-sizing: border-box; height: 24px; margin: 0 -3px 0 -2px; padding: 0 3px 0 4px; gap: 2px; background: #e8f3fc; border: 1px solid #2f86c8; }
.sep { width: 1px; height: 20px; background: #bdbdbd; flex: none; }
.grip { width: 2px; height: 16px; flex: none; background: repeating-linear-gradient(#aaa 0 2px, transparent 2px 5px); }

.main { flex: 1; min-height: 0; display: flex; gap: 5px; }
.nav { width: 238px; flex: none; display: flex; flex-direction: column; padding-bottom: 2px; box-sizing: border-box; }
.nav-head { height: 15px; flex: none; margin: 1px 0; background: #0a5fdc; color: #fff; font-size: 13px; line-height: 15px; display: flex; justify-content: space-between; padding: 0 4px 0 1px; }
.pin { display: flex; gap: 8px; align-items: center; }
.pin svg { width: 9px; height: 10px; }
.nbtn { height: 22px; flex: none; box-sizing: border-box; background: #f1f1f1; border: 1px solid #a6a6a6; text-align: center; font-size: 13px; line-height: 20px; }
.tree-wrap { flex: 1; min-height: 0; display: flex; flex-direction: column; background: #f1f1f1; }
.tree-tools { height: 28px; flex: none; display: flex; align-items: center; gap: 4px; padding-left: 6px; }
.tree-tools svg { width: 18px; height: 16px; }
.tree { position: relative; flex: 1; min-height: 0; margin: 0 2px 1px; padding-top: 1px; background: #fff; border: 1px solid #8a8a8a; overflow: hidden; }
.guide { position: absolute; width: 0; border-left: 1px dotted #777; margin-left: -3px; }
.row { position: relative; height: 16px; display: flex; align-items: center; padding-left: 33px; white-space: nowrap; }
.row.folder { padding-left: 8px; }
.dash { width: 9px; height: 0; border-top: 1px dotted #777; margin-right: 1px; flex: none; }
.dash.short { width: 5px; margin: 0 0 0 1px; }
.chev { width: 9px; height: 9px; margin-right: 1px; }
.fold { width: 16px; height: 14px; margin-right: 5px; }
.tic { width: 15px; height: 15px; margin-right: 5px; }
.rt { font-size: 12px; line-height: 16px; }
.code { font: 10px/16px "Liberation Mono", monospace; }
.hit .tic, .hit .rt { background: #d9d9d9; }
.hit .tic { margin-right: 0; padding-right: 5px; box-sizing: content-box; }
.sbar { position: absolute; right: 0; top: 0; bottom: 0; width: 16px; background: #f0f0f0; }
.sbar svg { position: absolute; left: 3px; width: 10px; height: 6px; top: 7px; }
.sbar svg + svg { top: auto; bottom: 7px; }
.thumb { position: absolute; left: 0; right: 0; top: 206px; height: 225px; background: #cdcdcd; }

.work { flex: 1; min-width: 0; display: flex; flex-direction: column; }
.r3 { height: 24px; margin: 1px 0 2px; }
.r3 .group { padding-left: 2px; gap: 6.100px; }
.r4 { height: 28px; gap: 1px; }
.r4 .group { padding-left: 4px; gap: 4px; }
.r4 .btn { margin-right: 2.500px; }
.r5 { height: 27px; padding: 2px 0 3px 413px; box-sizing: border-box; }
.r5 .group { padding-left: 3px; }
.r6 { height: 29px; }
.r6 .group { padding-left: 3px; gap: 6px; }
.r7 { height: 27px; margin-top: 1px; gap: 1px; }
.r7 .group { padding-left: 4px; gap: 7px; }
.r7 .grip { margin-right: -2px; }
.sel { height: 24px; display: flex; align-items: center; justify-content: space-between; box-sizing: border-box; padding: 0 3px 0 2px; background: #fff; flex: none; }
.lbl { color: #888; }
.txt { margin-left: 6px; }
.chk { width: 11px; height: 11px; border: 1px solid #aaa; flex: none; }
.spin { position: relative; width: 57px; height: 20px; box-sizing: border-box; border: 1px solid #777; color: #888; text-align: right; padding-right: 17px; line-height: 18px; flex: none; }
.sp-a, .sp-b { position: absolute; right: 4px; width: 0; height: 0; border: 3px solid transparent; }
.sp-a { top: 3px; border-bottom-color: #555; border-top: 0; }
.sp-b { bottom: 3px; border-top-color: #555; border-bottom: 0; }
.num { height: 20px; width: 55px; box-sizing: border-box; border: 1px solid #888; color: #999; padding: 0 2px; display: flex; align-items: center; justify-content: space-between; font-size: 13px; flex: none; }

.canvas { position: relative; height: 483px; flex: none; background: #000; overflow: hidden; }
.cad { position: absolute; left: 0; top: 0; }
.cad path, .cad line, .cad circle { shape-rendering: crispEdges; }
.panel { position: absolute; left: 10px; top: 2px; width: 167px; height: 178px; box-sizing: border-box; background: #fff; border: 1px solid #333; display: flex; flex-direction: column; }
.p-title { height: 31px; flex: none; box-sizing: border-box; padding: 6px 0 0 7px; color: #aaa; font-size: 12px; }
.p-box { flex: 1; border: 2px solid #888; border-top-width: 1px; padding: 2px 0 0 2px; font-size: 12px; line-height: 12px; }
.p-row { height: 12px; display: flex; align-items: center; gap: 3px; }
.p-chk { width: 10px; height: 10px; border: 1px solid #888; flex: none; }
.p-chk svg { width: 10px; height: 10px; }

.status { height: 20px; flex: none; display: flex; gap: 2px; font: 10px/18px "Liberation Mono", monospace; }
.cell { box-sizing: border-box; flex: none; padding-left: 2px; background: #fbfbfb; border: 1px solid #ddd; white-space: nowrap; }
.cj { font: 12px/18px "Noto Sans CJK SC", sans-serif; }

.taskbar { position: relative; height: 40px; flex: none; display: flex; background: #2b2b2b; color: #fff; }
.start { width: 48px; flex: none; background: #000; display: flex; align-items: center; justify-content: center; }
.start svg { width: 16px; height: 16px; }
.search { width: 344px; flex: none; background: #333; display: flex; align-items: center; padding-left: 9px; box-sizing: border-box; }
.ring { width: 20px; height: 20px; box-sizing: border-box; border: 3px solid #ddd; border-radius: 50%; }
.s-text { margin-left: 7px; color: #8d8d8d; font-size: 13px; }
.mic { width: 12px; height: 18px; margin-left: auto; margin-right: 14px; }
.apps { position: relative; flex: none; width: 733px; display: flex; padding-left: 2px; box-sizing: border-box; background: #2a2a2a; }
.tapp { position: relative; width: 48px; height: 40px; flex: none; display: flex; align-items: center; justify-content: center; }
.tapp svg { width: 24px; height: 24px; }
.lastpin { margin-right: 3px; }
.run { width: 49px; }
.run::after { content: ""; position: absolute; left: 1px; right: 1px; bottom: 0; height: 2px; background: #76b9ed; }
.active { background: #555; }
.t-sep { width: 27px; flex: none; position: relative; }
.ghost { position: absolute; color: #151515; font-weight: 700; white-space: nowrap; }
.g1 { left: 16px; top: 4px; font-size: 13px; }
.g2 { left: 374px; top: 12px; }
.g3 { left: 516px; top: 12px; font: 700 10px/16px "Liberation Mono", monospace; }
.ghost-btn { position: absolute; left: 596px; top: 9px; width: 94px; height: 31px; background: #15293e; color: #10202f; text-align: center; line-height: 24px; }
.cpu { position: absolute; left: 620px; top: 3px; width: 72px; display: flex; flex-direction: column; align-items: center; font-size: 12px; line-height: 18px; color: #eee; }
.tray { flex: none; width: 172px; background: #0a1418; display: flex; align-items: center; position: relative; }
.t1 { width: 14px; height: 8px; margin-left: -34px; margin-right: 9px; }
.t2 { width: 17px; height: 14px; margin-right: 9px; }
.t3 { width: 16px; height: 14px; margin-right: 6px; }
.zh { margin-left: 3px; font-size: 14px; }
.s-logo.small { position: static; width: 16px; height: 16px; font-size: 13px; line-height: 16px; margin-left: 13px; border-radius: 3px; }
.clock { position: relative; width: 72px; flex: none; margin-left: -56px; display: flex; flex-direction: column; align-items: center; font-size: 12.500px; line-height: 18px; padding-top: 2px; box-sizing: border-box; white-space: nowrap; }
.notify { width: 48px; flex: none; box-sizing: border-box; border-right: 1px solid #666; display: flex; align-items: center; justify-content: center; }
.notify svg { width: 16px; height: 16px; }

.ellipse { position: absolute; left: 0; top: 0; pointer-events: none; }
</style>
